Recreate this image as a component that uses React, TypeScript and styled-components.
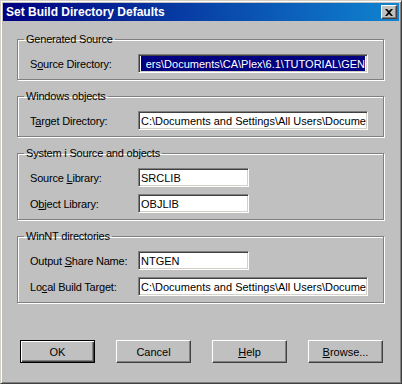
import React from 'react'
import styled, { createGlobalStyle, css } from 'styled-components'

const GlobalStyle = createGlobalStyle`
  html, body {
    margin: 0;
    padding: 0;
    background: #c0c0c0;
  }
  * {
    box-sizing: border-box;
  }
`

const face = '#c0c0c0'
const font = `'Liberation Sans', Arial, sans-serif`

const Window = styled.div`
  width: 402px;
  height: 384px;
  display: flex;
  flex-direction: column;
  background: ${face};
  border: 1px solid;
  border-color: #d4d0c8 #404040 #404040 #d4d0c8;
  box-shadow: inset 1px 1px 0 #fff, inset -1px -1px 0 #808080;
  padding: 2px;
  font-family: ${font};
  font-size: 11px;
  color: #000;
`

const TitleBar = styled.div`
  height: 18px;
  display: flex;
  align-items: center;
  justify-content: space-between;
  padding: 0 2px 0 3px;
  background: linear-gradient(90deg, #000080 0%, #1084d0 100%);
`

const Title = styled.span`
  color: #fff;
  font-weight: bold;
  font-size: 12px;
`

const CloseButton = styled.div`
  width: 16px;
  height: 14px;
  display: flex;
  align-items: center;
  justify-content: center;
  background: ${face};
  border: 1px solid;
  border-color: #fff #404040 #404040 #fff;
  box-shadow: inset -1px -1px 0 #808080;
`

const Body = styled.div`
  flex: 1;
  display: flex;
  flex-direction: column;
  padding: 12px 15px 0 14px;
`

const Group = styled.fieldset`
  margin: 0 0 10px 0;
  padding: 8px 15px 6px 12px;
  border: 1px solid #808080;
  box-shadow: inset 1px 1px 0 #fff, 1px 1px 0 #fff;
  min-width: 0;
  display: grid;
  grid-template-columns: 108px 1fr;
  row-gap: 7px;
  align-items: center;
`

const Legend = styled.legend`
  padding: 0 2px;
  margin-left: -6px;
  line-height: 13px;
  letter-spacing: -0.2px;
`

const Label = styled.label`
  white-space: nowrap;
  letter-spacing: -0.2px;
`

const Input = styled.div<{ $short?: boolean }>`
  width: ${({ $short }) => ($short ? '111px' : '230px')};
  height: 19px;
  display: flex;
  align-items: center;
  overflow: hidden;
  white-space: nowrap;
  background: #fff;
  border: 1px solid;
  border-color: #808080 #fff #fff #808080;
  box-shadow: inset 1px 1px 0 #404040, inset -1px -1px 0 #d4d0c8;
  padding: 1px 1px 1px 2px;
`

const Selected = styled.div`
  flex: 1;
  height: 100%;
  display: flex;
  align-items: center;
  justify-content: flex-end;
  background: #000080;
  color: #fff;
  margin-right: 1px;
`

const Buttons = styled.div`
  display: flex;
  gap: 21px;
  margin-top: 27px;
  padding-left: 3px;
`

const Button = styled.div<{ $default?: boolean }>`
  width: 75px;
  height: 23px;
  display: flex;
  align-items: center;
  justify-content: center;
  background: ${face};
  ${({ $default }) =>
    $default
      ? css`
          border: 1px solid #000;
          box-shadow: inset 1px 1px 0 #fff, inset -1px -1px 0 #404040,
            inset -2px -2px 0 #808080;
        `
      : css`
          border: 1px solid;
          border-color: #fff #404040 #404040 #fff;
          box-shadow: inset -1px -1px 0 #808080;
        `}
`

const Key = styled.u`
  text-decoration-thickness: 1px;
  text-underline-offset: 1px;
`

const CloseIcon = () => (
  <svg width="8" height="7" viewBox="0 0 8 7">
    <path d="M0 0h2l2 2 2-2h2L5 3.5 8 7H6L4 5 2 7H0l3-3.5z" fill="#000" />
  </svg>
)

const Row = ({ label, children }: { label: React.ReactNode; children: React.ReactNode }) => (
  <>
    <Label>{label}</Label>
    {children}
  </>
)

export default function App() {
  const docs = 'C:\\Documents and Settings\\All Users\\Docume'
  return (
    <>
      <GlobalStyle />
      <Window>
        <TitleBar>
          <Title>Set Build Directory Defaults</Title>
          <CloseButton>
            <CloseIcon />
          </CloseButton>
        </TitleBar>
        <Body>
          <Group>
            <Legend>Generated Source</Legend>
            <Row label={<>S<Key>o</Key>urce Directory:</>}>
              <Input>
                <Selected>ers\Documents\CA\Plex\6.1\TUTORIAL\GEN</Selected>
              </Input>
            </Row>
          </Group>
          <Group>
            <Legend>Windows objects</Legend>
            <Row label={<>T<Key>a</Key>rget Directory:</>}>
              <Input>{docs}</Input>
            </Row>
          </Group>
          <Group>
            <Legend>System i Source and objects</Legend>
            <Row label={<>Source <Key>L</Key>ibrary:</>}>
              <Input $short>SRCLIB</Input>
            </Row>
            <Row label={<>O<Key>b</Key>ject Library:</>}>
              <Input $short>OBJLIB</Input>
            </Row>
          </Group>
          <Group>
            <Legend>WinNT directories</Legend>
            <Row label={<>Output <Key>S</Key>hare Name:</>}>
              <Input $short>NTGEN</Input>
            </Row>
            <Row label={<>Lo<Key>c</Key>al Build Target:</>}>
              <Input>{docs}</Input>
            </Row>
          </Group>
          <Buttons>
            <Button $default>OK</Button>
            <Button>Cancel</Button>
            <Button>
              <span><Key>H</Key>elp</span>
            </Button>
            <Button>
              <span><Key>B</Key>rowse...</span>
            </Button>
          </Buttons>
        </Body>
      </Window>
    </>
  )
}
